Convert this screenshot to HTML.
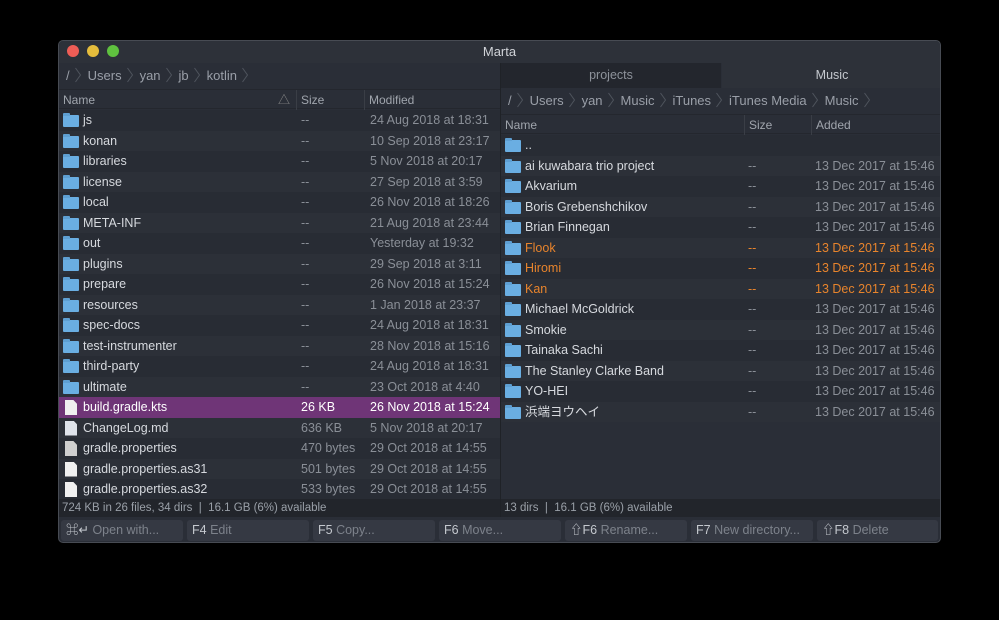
<!DOCTYPE html>
<html><head><meta charset="utf-8"><style>
*{margin:0;padding:0;box-sizing:border-box}
body{width:999px;height:620px;background:#000;font-family:"Liberation Sans","Noto Sans CJK JP",sans-serif;font-size:12.5px;color:#d6d9de;position:relative;overflow:hidden}
.win{position:absolute;left:58px;top:40px;width:883px;height:503px;background:#2a2e37;border:1px solid #474b53;border-radius:5px;overflow:hidden}
.title{position:absolute;left:0;top:0;width:100%;height:22px;background:#2d3139;text-align:center;line-height:21px;font-size:13px;color:#d0d3d8}
.dot{position:absolute;top:4px;width:12px;height:12px;border-radius:50%}
.pane{position:absolute;top:22px;overflow:hidden}
.bc{position:absolute;left:0;width:100%;height:26px;line-height:26px;color:#9a9fa8;font-size:13px;padding-left:7px;white-space:nowrap}
.bc i{display:inline-block;width:6px;height:16px;margin:0 7px 0 5px;vertical-align:-3px;background:no-repeat}
.bc i svg{display:block}
.hdr{position:absolute;left:0;width:100%;height:20px;line-height:20px;color:#a0a5ad;font-size:12px;border-bottom:1px solid #24272e;border-top:1px solid #24272e}
.hdr span,.row span{position:absolute;white-space:nowrap}
.hdr .sep{top:0;width:1px;height:20px;background:#3a3e46}
.row{position:absolute;left:0;width:100%;height:20.5px;line-height:20.5px}
.row:nth-child(odd){background:#282c34}
.row:nth-child(even){background:#2c3038}
.dim{color:#8a8f97}
.fold{position:absolute;top:5px;width:16px;height:12px;background:#6aaee2;border-radius:1px}
.fold:before{content:"";position:absolute;left:0;top:-2px;width:7px;height:3px;background:#5e9fd2;border-radius:1px 1px 0 0}
.file{position:absolute;top:3px;width:12px;height:15px;background:#f0f0f0;clip-path:polygon(0 0,70% 0,100% 25%,100% 100%,0 100%)}
.or{color:#e8842c}
.status{position:absolute;top:458px;height:18px;line-height:18px;background:#22252b;color:#9aa0a8;font-size:11.5px;padding-left:3px}
.btn{position:absolute;top:479px;height:21px;line-height:21px;background:#353943;border-radius:3px;color:#7d828b;font-size:12.5px;padding-left:5px;white-space:nowrap}
.btn b{font-weight:normal;color:#c4c8ce}
.sel{background:#6f3577!important;color:#fff}
</style></head><body>
<svg width="0" height="0" style="position:absolute"><defs><symbol id="ch" viewBox="0 0 6 16"><polyline points="0.5,1 5.5,8 0.5,15" fill="none" stroke="#4f545d" stroke-width="1"/></symbol></defs></svg>
<div class="win">
<div class="title">Marta
<div class="dot" style="left:8px;background:#ee5d56"></div>
<div class="dot" style="left:28px;background:#e5bd3c"></div>
<div class="dot" style="left:48px;background:#5fc13f"></div></div>

<div class="pane" style="left:0;width:441px;height:436px">
<div class="bc" style="top:0">/<i><svg width="6" height="16"><use href="#ch"/></svg></i>Users<i><svg width="6" height="16"><use href="#ch"/></svg></i>yan<i><svg width="6" height="16"><use href="#ch"/></svg></i>jb<i><svg width="6" height="16"><use href="#ch"/></svg></i>kotlin<i><svg width="6" height="16"><use href="#ch"/></svg></i></div>
<div class="hdr" style="top:26px"><span style="left:4px">Name</span><span style="left:219px;color:#888">△</span><span class="sep" style="left:237px"></span><span style="left:242px">Size</span><span class="sep" style="left:305px"></span><span style="left:310px">Modified</span></div>
<div style="position:absolute;top:47px;left:0;width:441px">
<div class="row" style="top:0"><div class="fold" style="left:4px"></div><span style="left:24px">js</span><span class="dim" style="left:242px">--</span><span class="dim" style="left:311px">24 Aug 2018 at 18:31</span></div>
<div class="row" style="top:20.5px"><div class="fold" style="left:4px"></div><span style="left:24px">konan</span><span class="dim" style="left:242px">--</span><span class="dim" style="left:311px">10 Sep 2018 at 23:17</span></div>
<div class="row" style="top:41px"><div class="fold" style="left:4px"></div><span style="left:24px">libraries</span><span class="dim" style="left:242px">--</span><span class="dim" style="left:311px">5 Nov 2018 at 20:17</span></div>
<div class="row" style="top:61.5px"><div class="fold" style="left:4px"></div><span style="left:24px">license</span><span class="dim" style="left:242px">--</span><span class="dim" style="left:311px">27 Sep 2018 at 3:59</span></div>
<div class="row" style="top:82px"><div class="fold" style="left:4px"></div><span style="left:24px">local</span><span class="dim" style="left:242px">--</span><span class="dim" style="left:311px">26 Nov 2018 at 18:26</span></div>
<div class="row" style="top:102.5px"><div class="fold" style="left:4px"></div><span style="left:24px">META-INF</span><span class="dim" style="left:242px">--</span><span class="dim" style="left:311px">21 Aug 2018 at 23:44</span></div>
<div class="row" style="top:123px"><div class="fold" style="left:4px"></div><span style="left:24px">out</span><span class="dim" style="left:242px">--</span><span class="dim" style="left:311px">Yesterday at 19:32</span></div>
<div class="row" style="top:143.5px"><div class="fold" style="left:4px"></div><span style="left:24px">plugins</span><span class="dim" style="left:242px">--</span><span class="dim" style="left:311px">29 Sep 2018 at 3:11</span></div>
<div class="row" style="top:164px"><div class="fold" style="left:4px"></div><span style="left:24px">prepare</span><span class="dim" style="left:242px">--</span><span class="dim" style="left:311px">26 Nov 2018 at 15:24</span></div>
<div class="row" style="top:184.5px"><div class="fold" style="left:4px"></div><span style="left:24px">resources</span><span class="dim" style="left:242px">--</span><span class="dim" style="left:311px">1 Jan 2018 at 23:37</span></div>
<div class="row" style="top:205px"><div class="fold" style="left:4px"></div><span style="left:24px">spec-docs</span><span class="dim" style="left:242px">--</span><span class="dim" style="left:311px">24 Aug 2018 at 18:31</span></div>
<div class="row" style="top:225.5px"><div class="fold" style="left:4px"></div><span style="left:24px">test-instrumenter</span><span class="dim" style="left:242px">--</span><span class="dim" style="left:311px">28 Nov 2018 at 15:16</span></div>
<div class="row" style="top:246px"><div class="fold" style="left:4px"></div><span style="left:24px">third-party</span><span class="dim" style="left:242px">--</span><span class="dim" style="left:311px">24 Aug 2018 at 18:31</span></div>
<div class="row" style="top:266.5px"><div class="fold" style="left:4px"></div><span style="left:24px">ultimate</span><span class="dim" style="left:242px">--</span><span class="dim" style="left:311px">23 Oct 2018 at 4:40</span></div>
<div class="row sel" style="top:287px"><div class="file" style="left:6px"></div><span style="left:24px">build.gradle.kts</span><span style="left:242px">26 KB</span><span style="left:311px">26 Nov 2018 at 15:24</span></div>
<div class="row" style="top:307.5px"><div class="file" style="left:6px;background:#dfe3ea"></div><span style="left:24px">ChangeLog.md</span><span class="dim" style="left:242px">636 KB</span><span class="dim" style="left:311px">5 Nov 2018 at 20:17</span></div>
<div class="row" style="top:328px"><div class="file" style="left:6px;background:#cfcfcf"></div><span style="left:24px">gradle.properties</span><span class="dim" style="left:242px">470 bytes</span><span class="dim" style="left:311px">29 Oct 2018 at 14:55</span></div>
<div class="row" style="top:348.5px"><div class="file" style="left:6px"></div><span style="left:24px">gradle.properties.as31</span><span class="dim" style="left:242px">501 bytes</span><span class="dim" style="left:311px">29 Oct 2018 at 14:55</span></div>
<div class="row" style="top:369px"><div class="file" style="left:6px"></div><span style="left:24px">gradle.properties.as32</span><span class="dim" style="left:242px">533 bytes</span><span class="dim" style="left:311px">29 Oct 2018 at 14:55</span></div>
</div>
</div>
<div style="position:absolute;left:441px;top:22px;width:1px;height:454px;background:#1f2227"></div>

<div class="pane" style="left:442px;width:441px;height:436px">
<div style="position:absolute;top:0;left:0;width:220px;height:25px;background:#23262d;text-align:center;line-height:25px;color:#8d929a;font-size:12.5px">projects</div>
<div style="position:absolute;top:0;left:221px;width:220px;height:25px;background:#2d3139;text-align:center;line-height:25px;color:#c4c8ce;font-size:12.5px">Music</div>
<div class="bc" style="top:25px">/<i><svg width="6" height="16"><use href="#ch"/></svg></i>Users<i><svg width="6" height="16"><use href="#ch"/></svg></i>yan<i><svg width="6" height="16"><use href="#ch"/></svg></i>Music<i><svg width="6" height="16"><use href="#ch"/></svg></i>iTunes<i><svg width="6" height="16"><use href="#ch"/></svg></i>iTunes Media<i><svg width="6" height="16"><use href="#ch"/></svg></i>Music<i><svg width="6" height="16"><use href="#ch"/></svg></i></div>
<div class="hdr" style="top:51px"><span style="left:4px">Name</span><span class="sep" style="left:243px"></span><span style="left:248px">Size</span><span class="sep" style="left:310px"></span><span style="left:315px">Added</span></div>
<div style="position:absolute;top:72px;left:0;width:441px">
<div class="row" style="top:0"><div class="fold" style="left:4px"></div><span style="left:24px">..</span></div>
<div class="row" style="top:20.5px"><div class="fold" style="left:4px"></div><span style="left:24px">ai kuwabara trio project</span><span class="dim" style="left:247px">--</span><span class="dim" style="left:314px">13 Dec 2017 at 15:46</span></div>
<div class="row" style="top:41px"><div class="fold" style="left:4px"></div><span style="left:24px">Akvarium</span><span class="dim" style="left:247px">--</span><span class="dim" style="left:314px">13 Dec 2017 at 15:46</span></div>
<div class="row" style="top:61.5px"><div class="fold" style="left:4px"></div><span style="left:24px">Boris Grebenshchikov</span><span class="dim" style="left:247px">--</span><span class="dim" style="left:314px">13 Dec 2017 at 15:46</span></div>
<div class="row" style="top:82px"><div class="fold" style="left:4px"></div><span style="left:24px">Brian Finnegan</span><span class="dim" style="left:247px">--</span><span class="dim" style="left:314px">13 Dec 2017 at 15:46</span></div>
<div class="row or" style="top:102.5px"><div class="fold" style="left:4px"></div><span style="left:24px">Flook</span><span style="left:247px">--</span><span style="left:314px">13 Dec 2017 at 15:46</span></div>
<div class="row or" style="top:123px"><div class="fold" style="left:4px"></div><span style="left:24px">Hiromi</span><span style="left:247px">--</span><span style="left:314px">13 Dec 2017 at 15:46</span></div>
<div class="row or" style="top:143.5px"><div class="fold" style="left:4px"></div><span style="left:24px">Kan</span><span style="left:247px">--</span><span style="left:314px">13 Dec 2017 at 15:46</span></div>
<div class="row" style="top:164px"><div class="fold" style="left:4px"></div><span style="left:24px">Michael McGoldrick</span><span class="dim" style="left:247px">--</span><span class="dim" style="left:314px">13 Dec 2017 at 15:46</span></div>
<div class="row" style="top:184.5px"><div class="fold" style="left:4px"></div><span style="left:24px">Smokie</span><span class="dim" style="left:247px">--</span><span class="dim" style="left:314px">13 Dec 2017 at 15:46</span></div>
<div class="row" style="top:205px"><div class="fold" style="left:4px"></div><span style="left:24px">Tainaka Sachi</span><span class="dim" style="left:247px">--</span><span class="dim" style="left:314px">13 Dec 2017 at 15:46</span></div>
<div class="row" style="top:225.5px"><div class="fold" style="left:4px"></div><span style="left:24px">The Stanley Clarke Band</span><span class="dim" style="left:247px">--</span><span class="dim" style="left:314px">13 Dec 2017 at 15:46</span></div>
<div class="row" style="top:246px"><div class="fold" style="left:4px"></div><span style="left:24px">YO-HEI</span><span class="dim" style="left:247px">--</span><span class="dim" style="left:314px">13 Dec 2017 at 15:46</span></div>
<div class="row" style="top:266.5px"><div class="fold" style="left:4px"></div><span style="left:24px">浜端ヨウヘイ</span><span class="dim" style="left:247px">--</span><span class="dim" style="left:314px">13 Dec 2017 at 15:46</span></div>
</div>
</div>

<div class="status" style="left:0;width:441px">724 KB in 26 files, 34 dirs &nbsp;| &nbsp;16.1 GB (6%) available</div>
<div class="status" style="left:442px;width:441px">13 dirs &nbsp;| &nbsp;16.1 GB (6%) available</div>

<div class="btn" style="left:2px;width:122px"><b>⌘↵</b> Open with...</div>
<div class="btn" style="left:128px;width:122px"><b>F4</b> Edit</div>
<div class="btn" style="left:254px;width:122px"><b>F5</b> Copy...</div>
<div class="btn" style="left:380px;width:122px"><b>F6</b> Move...</div>
<div class="btn" style="left:506px;width:122px"><b>⇧F6</b> Rename...</div>
<div class="btn" style="left:632px;width:122px"><b>F7</b> New directory...</div>
<div class="btn" style="left:758px;width:121px"><b>⇧F8</b> Delete</div>
</div>
</body></html>
